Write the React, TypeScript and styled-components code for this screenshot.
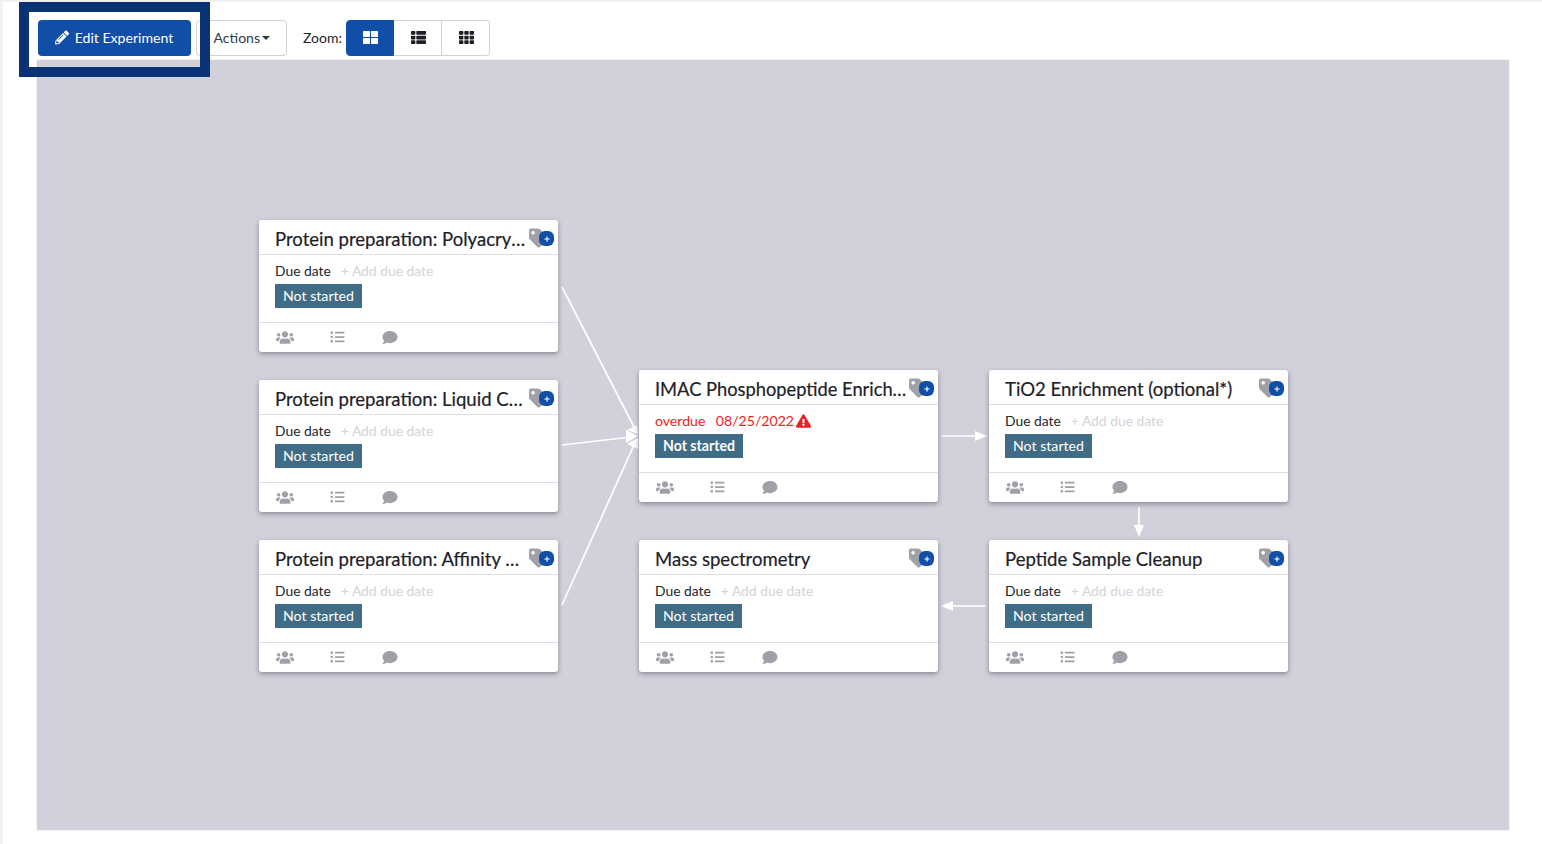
import React from "react";
import styled, { createGlobalStyle } from "styled-components";
import { FaPencilAlt, FaThLarge, FaThList, FaTh, FaUsers, FaListUl, FaComment, FaTag, FaExclamationTriangle, FaPlus } from "react-icons/fa";

const Global = createGlobalStyle`
  html, body { margin: 0; padding: 0; background: #fff; }
  body { font-family: Lato, "Liberation Sans", sans-serif; overflow: hidden; }
  * { box-sizing: border-box; }
`;

const Page = styled.div`
  position: relative;
  width: 1542px;
  height: 844px;
  border-left: 3px solid #f1f1f8;
  border-top: 2px solid #f0f0f2;
  padding: 18px 0 0 34px;
  background: #fff;
  overflow: hidden;
`;

const Highlight = styled.div`
  position: absolute;
  left: 16px;
  top: 0;
  width: 191px;
  height: 75px;
  border: 10px solid #0b3275;
  z-index: 3;
  pointer-events: none;
`;

const Toolbar = styled.div`
  display: flex;
  align-items: center;
  height: 36px;
  margin-bottom: 4px;
`;

const EditButton = styled.button`
  display: flex;
  align-items: center;
  justify-content: center;
  gap: 6px;
  width: 153px;
  height: 36px;
  margin-left: 1px;
  padding: 0 1px 2px 0;
  border: 0;
  border-radius: 4px;
  background: #114ea8;
  color: #fff;
  font: 400 14.1px Lato, sans-serif;
  position: relative;
  z-index: 4;
  svg { width: 14px; height: 15px; }
`;

const ActionsButton = styled.button`
  display: flex;
  align-items: center;
  justify-content: flex-end;
  gap: 2px;
  width: 91px;
  height: 36px;
  margin-left: 5px;
  padding: 0 16px 2px 0;
  border: 1px solid #d0d1da;
  border-radius: 4px;
  background: #fff;
  color: #333a44;
  font: 400 14px Lato, sans-serif;
`;

const Caret = styled.span`
  width: 0;
  height: 0;
  margin-top: 2px;
  border-left: 4px solid transparent;
  border-right: 4px solid transparent;
  border-top: 4px solid #333a44;
`;

const ZoomLabel = styled.span`
  margin: 0 4px 2px 16px;
  font-size: 14px;
  color: #22262c;
`;

const ZoomGroup = styled.div`
  display: flex;
  height: 36px;
`;

const ZoomButton = styled.button<{ $active?: boolean }>`
  display: flex;
  align-items: center;
  justify-content: center;
  width: 48px;
  height: 36px;
  padding: 0 0 1px ${p => (p.$active ? 1 : 2)}px;
  border: 1px solid ${p => (p.$active ? "#114ea8" : "#d0d1da")};
  border-left-width: ${p => (p.$active ? 1 : 0)}px;
  background: ${p => (p.$active ? "#114ea8" : "#fff")};
  color: ${p => (p.$active ? "#fff" : "#1c2026")};
  &:first-child { border-radius: 4px 0 0 4px; }
  &:last-child { border-radius: 0 4px 4px 0; }
  svg { width: 15px; height: 15px; }
`;

const Canvas = styled.div`
  position: relative;
  width: 1472px;
  height: 770px;
  background: #d0d1da;
  box-shadow: 0 0 2px rgba(120, 120, 140, 0.25);
`;

const Arrows = styled.svg`
  position: absolute;
  inset: 0;
  width: 100%;
  height: 100%;
`;

const Node = styled.div<{ $x: number; $y: number }>`
  position: absolute;
  left: ${p => p.$x}px;
  top: ${p => p.$y}px;
  width: 299px;
  height: 132px;
  display: flex;
  flex-direction: column;
  background: #fff;
  border-radius: 3px;
  box-shadow: 0 2px 5px rgba(70, 70, 85, 0.5);
`;

const Header = styled.div`
  position: relative;
  height: 35px;
  padding: 8px 0 0 16px;
  border-bottom: 1px solid #dddde3;
`;

const Title = styled.div<{ $size: number }>`
  width: 253px;
  font-size: ${p => p.$size}px;
  line-height: 22px;
  color: #1d2128;
  white-space: nowrap;
  overflow: hidden;
  text-overflow: ellipsis;
  -webkit-text-stroke: 0.2px #1d2128;
`;

const TagBadge = styled.div`
  position: absolute;
  left: 270px;
  top: 7px;
  width: 26px;
  height: 20px;
`;

const TagIcon = styled(FaTag)`
  position: absolute;
  left: 0;
  top: 1px;
  width: 19px;
  height: 20px;
  color: #a0a0a9;
`;

const PlusDot = styled.span`
  position: absolute;
  left: 10px;
  top: 4px;
  width: 15px;
  height: 15px;
  display: flex;
  align-items: center;
  justify-content: center;
  border-radius: 6px;
  background: #114ea8;
  color: #fff;
  svg { width: 6px; height: 6px; }
`;

const Body = styled.div`
  flex: 1;
  padding: 7px 16px 0;
`;

const DueRow = styled.div<{ $overdue?: boolean }>`
  display: flex;
  align-items: center;
  height: 17px;
  font-size: ${p => (p.$overdue ? 14.1 : 13.85)}px;
  line-height: 17px;
  color: ${p => (p.$overdue ? "#ee1c25" : "#22262c")};
`;

const AddDue = styled.span`
  margin-left: 10px;
  color: #d3d3da;
`;

const OverdueDate = styled.span`
  margin-left: 10.5px;
`;

const Warn = styled(FaExclamationTriangle)`
  width: 15px;
  height: 14px;
  margin-left: 2px;
  color: #ee1c25;
`;

const Status = styled.div<{ $bold?: boolean }>`
  display: inline-block;
  height: 24px;
  margin-top: 5px;
  padding: 0 8px;
  background: #416c85;
  color: #fff;
  font-size: 14.15px;
  line-height: 24px;
  font-weight: ${p => (p.$bold ? 700 : 400)};
`;

const Footer = styled.div`
  display: flex;
  align-items: center;
  height: 30px;
  padding: 0 0 1px 17px;
  border-top: 1px solid #dddde3;
  color: #a0a0a9;
`;

const FootIcon = styled.span<{ $w: number }>`
  display: flex;
  width: ${p => p.$w}px;
  svg { width: 18px; height: 15px; }
`;

const FootList = styled(FootIcon)`
  svg { width: 15px; height: 14px; }
`;

type Item = { x: number; y: number; title: string; overdue?: boolean; titleSize?: number };

const items: Item[] = [
  { x: 222, y: 160, title: "Protein preparation: Polyacrylamide gel" },
  { x: 222, y: 320, title: "Protein preparation: Liquid Chromatography" },
  { x: 222, y: 480, title: "Protein preparation: Affinity purification" },
  { x: 602, y: 310, title: "IMAC Phosphopeptide Enrichment protocol", overdue: true, titleSize: 18.3 },
  { x: 952, y: 310, title: "TiO2 Enrichment (optional*)" },
  { x: 602, y: 480, title: "Mass spectrometry" },
  { x: 952, y: 480, title: "Peptide Sample Cleanup" },
];

const lines = [
  [525, 227, 597, 367],
  [525, 385, 594, 377],
  [525, 545, 597, 385],
  [905, 376, 940, 376],
  [1102, 447, 1102, 467],
  [949, 546, 914, 546],
];

const heads = [
  "601,374 590,370 600,365",
  "601,376 589,370 589,383",
  "601,378 590,384 601,389",
  "950,376 938,371 938,381",
  "1102,477 1097,465 1107,465",
  "904,546 916,541 916,551",
];

export default function App() {
  return (
    <Page>
      <Global />
      <Highlight />
      <Toolbar>
        <EditButton><FaPencilAlt />Edit Experiment</EditButton>
        <ActionsButton>Actions<Caret /></ActionsButton>
        <ZoomLabel>Zoom:</ZoomLabel>
        <ZoomGroup>
          <ZoomButton $active><FaThLarge /></ZoomButton>
          <ZoomButton><FaThList /></ZoomButton>
          <ZoomButton><FaTh /></ZoomButton>
        </ZoomGroup>
      </Toolbar>
      <Canvas>
        <Arrows viewBox="0 0 1472 770">
          {lines.map((l, i) => (
            <line key={i} x1={l[0]} y1={l[1]} x2={l[2]} y2={l[3]} stroke="#fff" strokeWidth="1.7" />
          ))}
          {heads.map((h, i) => <polygon key={i} points={h} fill="#fff" />)}
        </Arrows>
        {items.map(n => (
          <Node key={n.title} $x={n.x} $y={n.y}>
            <Header>
              <Title $size={n.titleSize ?? 18.55}>{n.title}</Title>
              <TagBadge>
                <TagIcon />
                <PlusDot><FaPlus /></PlusDot>
              </TagBadge>
            </Header>
            <Body>
              {n.overdue ? (
                <DueRow $overdue>overdue<OverdueDate>08/25/2022</OverdueDate><Warn /></DueRow>
              ) : (
                <DueRow>Due date<AddDue>+ Add due date</AddDue></DueRow>
              )}
              <Status $bold={n.overdue}>Not started</Status>
            </Body>
            <Footer>
              <FootIcon $w={54}><FaUsers /></FootIcon>
              <FootList $w={51}><FaListUl /></FootList>
              <FootIcon $w={18}><FaComment /></FootIcon>
            </Footer>
          </Node>
        ))}
      </Canvas>
    </Page>
  );
}
